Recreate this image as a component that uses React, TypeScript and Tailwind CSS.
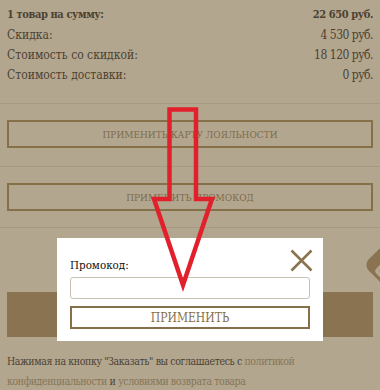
import React from "react";

export default function App() {
  return (
    <div className="relative w-[380px] h-[390px] overflow-hidden bg-[#b3a68f] text-[#4b4232] font-['DejaVu_Serif_Condensed','DejaVu_Serif',serif] font-stretch-condensed">
      <div className="px-[7px] pt-[5px]">
        <div className="text-[12px] leading-[20px]">
          <div className="flex justify-between font-bold text-[11px] tracking-[-0.4px]">
            <span>1 товар на сумму:</span>
            <span>22 650 руб.</span>
          </div>
          <div className="flex justify-between">
            <span>Скидка:</span>
            <span className="tracking-[-0.5px]">4 530 руб.</span>
          </div>
          <div className="flex justify-between">
            <span>Стоимость со скидкой:</span>
            <span className="tracking-[-0.5px]">18 120 руб.</span>
          </div>
          <div className="flex justify-between">
            <span>Стоимость доставки:</span>
            <span className="tracking-[-0.5px]">0 руб.</span>
          </div>
        </div>
      </div>

      <div className="mt-[18px] h-px bg-[#a69a83]" />
      <div className="px-[7px]">
        <div className="mt-[16px] h-[28px] border-2 border-[#857049] flex items-center justify-center text-[10px] text-[#7d6c4c]">
          ПРИМЕНИТЬ КАРТУ ЛОЯЛЬНОСТИ
        </div>
      </div>
      <div className="mt-[18px] h-px bg-[#a69a83]" />
      <div className="px-[7px]">
        <div className="mt-[16px] h-[28px] border-2 border-[#857049] flex items-center justify-center text-[10px] text-[#7d6c4c]">
          ПРИМЕНИТЬ ПРОМОКОД
        </div>
      </div>
      <div className="mt-[16px] h-px bg-[#a69a83]" />
      <div className="px-[7px]">
        <div className="mt-[64px] h-[45px] bg-[#8a7350]" />
        <div className="mt-[14px] text-[10.5px] tracking-[-0.4px] leading-[20px]">
          <div>
            Нажимая на кнопку "Заказать" вы соглашаетесь с{" "}
            <span className="text-[#857556]">политикой</span>
          </div>
          <div>
            <span className="text-[#857556]">конфиденциальности</span> и{" "}
            <span className="text-[#857556]">условиями возврата товара</span>
          </div>
        </div>
      </div>

      {/* chat widget peeking from right edge */}
      <div className="absolute left-[371px] top-[246px] w-[38px] h-[38px] rotate-45 rounded-[8px] bg-[#8a7350]" />
      <div className="absolute left-[377px] top-[263px] w-[16px] h-[16px] rotate-45 rounded-[4px] border-[4px] border-[#b3a68f]" />

      {/* modal */}
      <div className="absolute left-[57px] top-[238px] w-[266px] h-[103px] bg-white px-[13px] pt-[19px]">
        <div className="text-[11.5px] leading-[16px] text-[#111]">Промокод:</div>
        <div className="mt-[4px] h-[22px] border border-[#c9c2b4] rounded-[3px]" />
        <div className="mt-[7px] h-[23px] border-2 border-[#857049] flex items-center justify-center text-[12px] text-[#857049]">
          ПРИМЕНИТЬ
        </div>
        <svg
          className="absolute top-[11px] right-[10px]"
          width="23"
          height="23"
          viewBox="0 0 23 23"
        >
          <path d="M1.5 1.5 L21.5 21.5 M21.5 1.5 L1.5 21.5" stroke="#8a7450" strokeWidth="2.6" fill="none" />
        </svg>
      </div>

      {/* red arrow */}
      <svg className="absolute left-0 top-0 pointer-events-none" width="380" height="390">
        <path
          d="M169.5 109.5 L196 109.5 L196 199 L212 199 L183 285 L154 199 L169.5 199 Z"
          stroke="#e2202b"
          strokeWidth="4.5"
          fill="none"
          strokeLinejoin="miter"
        />
      </svg>
    </div>
  );
}
